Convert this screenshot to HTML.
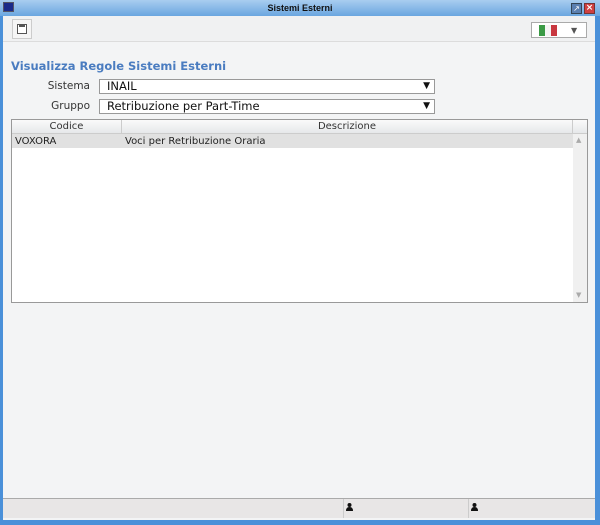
<!DOCTYPE html>
<html><head><style>
*{margin:0;padding:0;box-sizing:border-box}
body{width:600px;height:525px;overflow:hidden;font-family:"DejaVu Sans","Liberation Sans",sans-serif;background:#4a90d9;position:relative}
.a{position:absolute}
</style></head><body>
<div class="a" style="left:0;top:0;width:600px;height:16px;background:linear-gradient(#a9cdf0,#6aa6e0)"></div>
<div class="a" style="left:3px;top:2px;width:11px;height:10px;background:#1a2a8a;border:1px solid #556"></div>
<div class="a" style="left:0;top:3px;width:600px;text-align:center;font-size:9px;font-weight:bold;color:#111;font-family:'Liberation Sans',sans-serif">Sistemi Esterni</div>
<div class="a" style="left:571px;top:3px;width:11px;height:11px;background:#5a7fb0;border:1px solid #345;color:#fff;font-size:8px;line-height:9px;text-align:center">↗</div>
<div class="a" style="left:584px;top:3px;width:11px;height:11px;background:#d04040;border:1px solid #733;color:#fff;font-size:9px;line-height:9px;text-align:center;font-weight:bold">×</div>
<div class="a" style="left:3px;top:16px;width:592px;height:504px;background:#f3f4f5"></div>
<div class="a" style="left:3px;top:16px;width:592px;height:26px;background:#f0f1f2;border-bottom:1px solid #dcdcdc"></div>
<div class="a" style="left:12px;top:19px;width:20px;height:20px;border:1px solid #ccc;background:#f5f5f5"></div>
<div class="a" style="left:17px;top:24px;width:10px;height:10px;border:1.5px solid #555;background:#fff"></div>
<div class="a" style="left:19px;top:24px;width:6px;height:3px;background:#555"></div>
<div class="a" style="left:531px;top:22px;width:56px;height:16px;border:1px solid #aaa;background:#fff"></div>
<div class="a" style="left:539px;top:25px;width:6px;height:11px;background:#3a9a45"></div>
<div class="a" style="left:545px;top:25px;width:6px;height:11px;background:#f4f4f4"></div>
<div class="a" style="left:551px;top:25px;width:6px;height:11px;background:#c8373f"></div>
<div class="a" style="left:571px;top:26px;font-size:8px;color:#555">▼</div>
<div class="a" style="left:11px;top:59px;font-size:11.5px;font-weight:bold;color:#4a7cc0">Visualizza Regole Sistemi Esterni</div>
<div class="a" style="left:30px;top:80px;width:60px;text-align:right;font-size:10.5px;color:#333">Sistema</div>
<div class="a" style="left:30px;top:100px;width:60px;text-align:right;font-size:10.5px;color:#333">Gruppo</div>
<div class="a" style="left:99px;top:79px;width:336px;height:15px;border:1px solid #999;background:#fff;font-size:11.5px;line-height:13px;padding-left:7px;color:#111">INAIL<span class="a" style="right:4px;top:0;font-size:9px">▼</span></div>
<div class="a" style="left:99px;top:99px;width:336px;height:15px;border:1px solid #999;background:#fff;font-size:11.5px;line-height:13px;padding-left:7px;color:#111">Retribuzione per Part-Time<span class="a" style="right:4px;top:0;font-size:9px">▼</span></div>
<div class="a" style="left:11px;top:119px;width:577px;height:184px;border:1px solid #999;background:#fff"></div>
<div class="a" style="left:12px;top:120px;width:575px;height:14px;background:linear-gradient(#fafafa,#e6e8ea);border-bottom:1px solid #ccc"></div>
<div class="a" style="left:121px;top:120px;width:1px;height:28px;background:#ccc"></div>
<div class="a" style="left:572px;top:120px;width:1px;height:14px;background:#ccc"></div>
<div class="a" style="left:12px;top:121px;width:109px;text-align:center;font-size:10px;color:#333">Codice</div>
<div class="a" style="left:122px;top:121px;width:450px;text-align:center;font-size:10px;color:#333">Descrizione</div>
<div class="a" style="left:12px;top:134px;width:561px;height:14px;background:#e1e1e1"></div>
<div class="a" style="left:15px;top:136px;font-size:10px;color:#222">VOXORA</div>
<div class="a" style="left:125px;top:136px;font-size:10px;color:#222">Voci per Retribuzione Oraria</div>
<div class="a" style="left:573px;top:134px;width:14px;height:168px;background:#f0f0f0"></div>
<div class="a" style="left:576px;top:136px;font-size:7px;color:#aaa">▲</div>
<div class="a" style="left:576px;top:291px;font-size:7px;color:#aaa">▼</div>
<div class="a" style="left:3px;top:498px;width:592px;height:20px;background:#e8e6e6;border-top:1px solid #aaa"></div>
<div class="a" style="left:343px;top:499px;width:1px;height:19px;background:#ccc"></div>
<div class="a" style="left:468px;top:499px;width:1px;height:19px;background:#ccc"></div>
<svg class="a" style="left:346px;top:503px" width="8" height="8"><circle cx="3.5" cy="2" r="2" fill="#111"/><path d="M0 8 Q0 4 3.5 4 Q7 4 7 8Z" fill="#111"/></svg>
<svg class="a" style="left:471px;top:503px" width="8" height="8"><circle cx="3.5" cy="2" r="2" fill="#111"/><path d="M0 8 Q0 4 3.5 4 Q7 4 7 8Z" fill="#111"/></svg>
</body></html>
